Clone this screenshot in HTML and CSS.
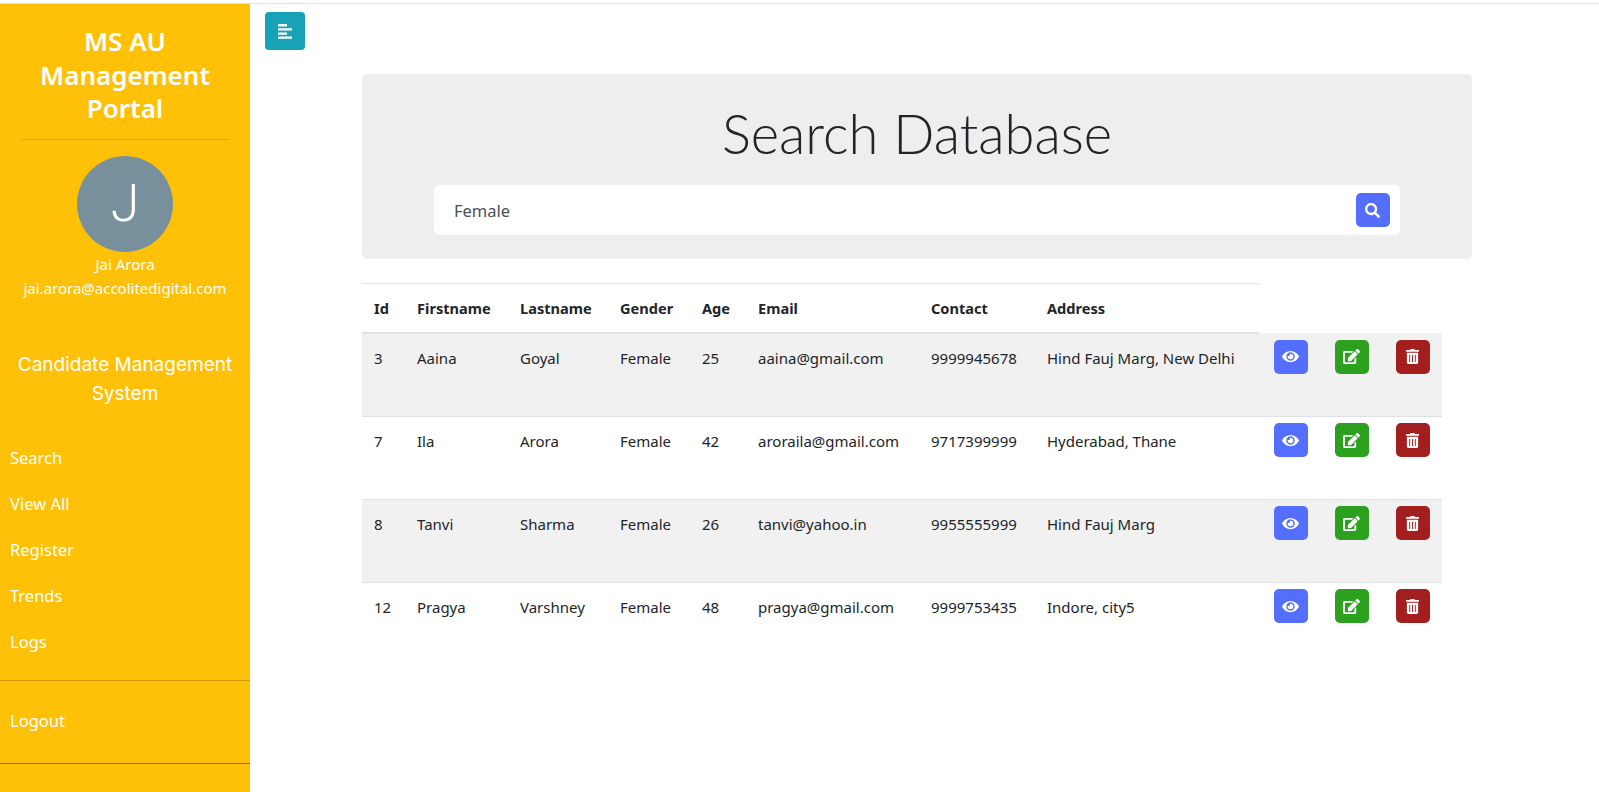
FILE: index.html
```html
<!DOCTYPE html>
<html lang="en">
<head>
    <meta charset="UTF-8">
    <meta name="viewport" content="width=device-width, initial-scale=1.0">
    <title>MS AU Management Portal</title>
    <link rel="stylesheet" href="styles.css">
</head>
<body>
    <svg class="icon-defs" aria-hidden="true">
        <symbol id="i-eye" viewBox="0 0 576 512"><path d="M572.52 241.4C518.29 135.59 410.93 64 288 64S57.68 135.64 3.48 241.41a32.35 32.35 0 0 0 0 29.19C57.71 376.41 165.07 448 288 448s230.32-71.64 284.52-177.41a32.35 32.35 0 0 0 0-29.19zM288 400a144 144 0 1 1 144-144 143.93 143.93 0 0 1-144 144zm0-240a95.31 95.31 0 0 0-25.31 3.79 47.85 47.85 0 0 1-66.9 66.9A95.78 95.78 0 1 0 288 160z"/></symbol>
        <symbol id="i-edit" viewBox="0 0 576 512"><path d="M402.6 83.2l90.2 90.2c3.8 3.8 3.8 10 0 13.8L274.4 405.6l-92.8 10.3c-12.4 1.4-22.9-9.1-21.5-21.5l10.3-92.8L388.8 83.2c3.8-3.8 10-3.8 13.8 0zm162-22.9l-48.8-48.8c-15.2-15.2-39.9-15.2-55.2 0l-35.4 35.4c-3.8 3.8-3.8 10 0 13.8l90.2 90.2c3.8 3.8 10 3.8 13.8 0l35.4-35.4c15.2-15.3 15.2-40 0-55.2zM384 346.2V448H64V128h229.8c3.2 0 6.2-1.3 8.5-3.5l40-40c7.6-7.6 2.2-20.5-8.5-20.5H48C21.5 64 0 85.5 0 112v352c0 26.5 21.5 48 48 48h352c26.5 0 48-21.5 48-48V306.2c0-10.7-12.9-16-20.5-8.5l-40 40c-2.2 2.3-3.5 5.3-3.5 8.5z"/></symbol>
        <symbol id="i-trash" viewBox="0 0 448 512"><path d="M32 464a48 48 0 0 0 48 48h288a48 48 0 0 0 48-48V128H32zm272-256a16 16 0 0 1 32 0v224a16 16 0 0 1-32 0zm-96 0a16 16 0 0 1 32 0v224a16 16 0 0 1-32 0zm-96 0a16 16 0 0 1 32 0v224a16 16 0 0 1-32 0zM432 32H312l-9.4-18.7A24 24 0 0 0 281.1 0H166.8a23.72 23.72 0 0 0-21.4 13.3L136 32H16A16 16 0 0 0 0 48v32a16 16 0 0 0 16 16h416a16 16 0 0 0 16-16V48a16 16 0 0 0-16-16z"/></symbol>
        <symbol id="i-search" viewBox="0 0 512 512"><path d="M505 442.7L405.3 343c-4.5-4.5-10.6-7-17-7H372c27.6-35.3 44-79.7 44-128C416 93.1 322.9 0 208 0S0 93.1 0 208s93.1 208 208 208c48.3 0 92.7-16.4 128-44v16.3c0 6.4 2.5 12.5 7 17l99.7 99.7c9.4 9.4 24.6 9.4 33.9 0l28.3-28.3c9.4-9.4 9.4-24.6.1-34zM208 336c-70.7 0-128-57.2-128-128 0-70.7 57.2-128 128-128 70.7 0 128 57.2 128 128 0 70.7-57.2 128-128 128z"/></symbol>
    </svg>

    <div class="wrapper">
        <nav class="sidebar">
            <div class="sidebar-header">
                <h3>MS AU Management Portal</h3>
            </div>
            <div class="profile">
                <div class="avatar">J</div>
                <div class="profile-text">Jai Arora</div>
                <div class="profile-text">jai.arora@accolitedigital.com</div>
            </div>
            <p class="system-name">Candidate Management System</p>
            <ul class="nav-list">
                <li><a href="#">Search</a></li>
                <li><a href="#">View All</a></li>
                <li><a href="#">Register</a></li>
                <li><a href="#">Trends</a></li>
                <li><a href="#">Logs</a></li>
            </ul>
            <ul class="nav-list nav-bottom">
                <li><a href="#">Logout</a></li>
            </ul>
        </nav>

        <div class="content">
            <button class="toggle-btn" type="button" aria-label="Toggle sidebar">
                <svg width="14" height="15" viewBox="0 0 14 15" fill="#fff">
                    <rect x="0" y="0" width="9" height="2.4" rx="0.3"/>
                    <rect x="0" y="4.2" width="14" height="2.4" rx="0.3"/>
                    <rect x="0" y="8.4" width="9" height="2.4" rx="0.3"/>
                    <rect x="0" y="12.4" width="14" height="2.4" rx="0.3"/>
                </svg>
            </button>

            <div class="container">
                <div class="jumbotron">
                    <h1>Search Database</h1>
                    <form class="search-box">
                        <input type="text" value="Female">
                        <button class="btn btn-blue" type="submit" aria-label="Search"><svg class="icon"><use href="#i-search"/></svg></button>
                    </form>
                </div>

                <table class="results">
                    <colgroup>
                        <col class="c-id"><col class="c-first"><col class="c-last"><col class="c-gender"><col class="c-age"><col class="c-email"><col class="c-contact"><col class="c-address"><col class="c-action"><col class="c-action"><col class="c-action">
                    </colgroup>
                    <thead>
                        <tr>
                            <th>Id</th><th>Firstname</th><th>Lastname</th><th>Gender</th><th>Age</th><th>Email</th><th>Contact</th><th>Address</th>
                        </tr>
                    </thead>
                    <tbody>
                        <tr>
                            <td>3</td><td>Aaina</td><td>Goyal</td><td>Female</td><td>25</td><td>aaina@gmail.com</td><td>9999945678</td><td>Hind Fauj Marg, New Delhi</td>
                            <td class="action"><button class="btn btn-blue" aria-label="View"><svg class="icon"><use href="#i-eye"/></svg></button></td>
                            <td class="action"><button class="btn btn-green" aria-label="Edit"><svg class="icon"><use href="#i-edit"/></svg></button></td>
                            <td class="action"><button class="btn btn-red" aria-label="Delete"><svg class="icon"><use href="#i-trash"/></svg></button></td>
                        </tr>
                        <tr>
                            <td>7</td><td>Ila</td><td>Arora</td><td>Female</td><td>42</td><td>aroraila@gmail.com</td><td>9717399999</td><td>Hyderabad, Thane</td>
                            <td class="action"><button class="btn btn-blue" aria-label="View"><svg class="icon"><use href="#i-eye"/></svg></button></td>
                            <td class="action"><button class="btn btn-green" aria-label="Edit"><svg class="icon"><use href="#i-edit"/></svg></button></td>
                            <td class="action"><button class="btn btn-red" aria-label="Delete"><svg class="icon"><use href="#i-trash"/></svg></button></td>
                        </tr>
                        <tr>
                            <td>8</td><td>Tanvi</td><td>Sharma</td><td>Female</td><td>26</td><td>tanvi@yahoo.in</td><td>9955555999</td><td>Hind Fauj Marg</td>
                            <td class="action"><button class="btn btn-blue" aria-label="View"><svg class="icon"><use href="#i-eye"/></svg></button></td>
                            <td class="action"><button class="btn btn-green" aria-label="Edit"><svg class="icon"><use href="#i-edit"/></svg></button></td>
                            <td class="action"><button class="btn btn-red" aria-label="Delete"><svg class="icon"><use href="#i-trash"/></svg></button></td>
                        </tr>
                        <tr>
                            <td>12</td><td>Pragya</td><td>Varshney</td><td>Female</td><td>48</td><td>pragya@gmail.com</td><td>9999753435</td><td>Indore, city5</td>
                            <td class="action"><button class="btn btn-blue" aria-label="View"><svg class="icon"><use href="#i-eye"/></svg></button></td>
                            <td class="action"><button class="btn btn-green" aria-label="Edit"><svg class="icon"><use href="#i-edit"/></svg></button></td>
                            <td class="action"><button class="btn btn-red" aria-label="Delete"><svg class="icon"><use href="#i-trash"/></svg></button></td>
                        </tr>
                    </tbody>
                </table>
            </div>
        </div>
    </div>
</body>
</html>
```

FILE: styles.css
```css
* {
    box-sizing: border-box;
}

html, body {
    height: 100%;
}

body {
    margin: 0;
    padding-top: 3px;
    overflow: hidden;
    font-family: 'Noto Sans', 'Open Sans', sans-serif;
    font-size: 15px;
    color: #212529;
    background-color: #fff;
}

.icon-defs {
    display: none;
}

.wrapper {
    display: flex;
    height: 789px;
    border-top: 1px solid #dee2e6;
}

.sidebar {
    width: 250px;
    flex-shrink: 0;
    background-color: #ffc107;
    color: #fff;
}

.sidebar-header {
    padding: 21px 20px 0;
}

.sidebar-header h3 {
    margin: 0;
    padding-bottom: 13px;
    font-size: 26px;
    font-weight: 600;
    line-height: 33.5px;
    text-align: center;
    border-bottom: 1px solid rgba(0, 0, 0, 0.1);
}

.profile {
    padding-top: 16px;
    text-align: center;
}

.avatar {
    width: 96px;
    height: 96px;
    margin: 0 auto;
    border-radius: 50%;
    background-color: #78909c;
    font-family: 'Roboto', sans-serif;
    font-size: 52px;
    font-weight: 300;
    line-height: 96px;
}

.profile-text {
    font-size: 15px;
    line-height: 24px;
}

.system-name {
    margin: 50px 5px 0;
    font-family: 'Inter', sans-serif;
    font-size: 19px;
    font-weight: 400;
    line-height: 29px;
    text-align: center;
}

.nav-list {
    list-style: none;
    margin: 27px 0 0;
    padding: 0 0 15px;
    border-bottom: 1px solid rgba(90, 70, 0, 0.3);
}

.nav-list a {
    display: block;
    padding: 10px;
    font-size: 16.5px;
    line-height: 26px;
    color: #fff;
    text-decoration: none;
}

.nav-bottom {
    margin-top: 17px;
    padding-bottom: 19px;
    border-bottom: 1px solid #5a6f7a;
}

.content {
    flex: 1;
    padding: 8px 15px 0;
}

.toggle-btn {
    display: flex;
    align-items: center;
    justify-content: center;
    width: 40px;
    height: 38px;
    padding: 0;
    border: none;
    border-radius: 4px;
    background-color: #17a2b8;
}

.container {
    width: 1110px;
    margin: 24px 0 0 97px;
}

.jumbotron {
    height: 185px;
    padding: 26px 72px 0;
    border-radius: 5px;
    background-color: #eee;
}

.jumbotron h1 {
    margin: 0 0 18px;
    font-family: 'Lato', sans-serif;
    font-size: 54.3px;
    font-weight: 300;
    line-height: 67px;
    text-align: center;
}

.search-box {
    display: flex;
    align-items: center;
    justify-content: space-between;
    height: 50px;
    padding: 0 10px 0 20px;
    border-radius: 5px;
    background-color: #fff;
}

.search-box input {
    flex: 1;
    border: none;
    outline: none;
    padding: 0;
    font-family: inherit;
    font-size: 16.5px;
    color: #495057;
    background: transparent;
}

.btn {
    display: flex;
    align-items: center;
    justify-content: center;
    width: 34px;
    height: 34px;
    padding: 0 2px 0 0;
    border: none;
    border-radius: 5px;
}

.btn-blue {
    background-color: #546eff;
}

.btn-green {
    background-color: #2ca01f;
}

.btn-red {
    background-color: #a31f1f;
}

.icon {
    width: 17px;
    height: 15px;
    fill: #fff;
}

.results {
    width: 1080px;
    margin-top: 24px;
    table-layout: fixed;
    border-collapse: collapse;
    font-size: 15px;
}

.c-id { width: 43px; }
.c-first { width: 103px; }
.c-last { width: 100px; }
.c-gender { width: 82px; }
.c-age { width: 56px; }
.c-email { width: 173px; }
.c-contact { width: 116px; }
.c-address { width: 224px; }
.c-action { width: 61px; }

.results th {
    height: 49px;
    padding: 0 12px;
    text-align: left;
    font-size: 14.6px;
    font-weight: 700;
    border-top: 1px solid #dee2e6;
    border-bottom: 2px solid #dee2e6;
    white-space: nowrap;
}

.results td {
    height: 83px;
    padding: 14px 12px 0;
    vertical-align: top;
    line-height: 20px;
    white-space: nowrap;
    border-bottom: 1px solid #dee2e6;
}

.results td.action {
    padding: 6px 12px 0 15px;
}

.results tbody tr:first-child td {
    height: 84px;
}

.results tbody tr:first-child td.action {
    padding-top: 7px;
}

.results tbody tr:nth-child(odd) {
    background-color: #f1f1f1;
}

.results tbody tr:last-child td {
    border-bottom: none;
}
```
